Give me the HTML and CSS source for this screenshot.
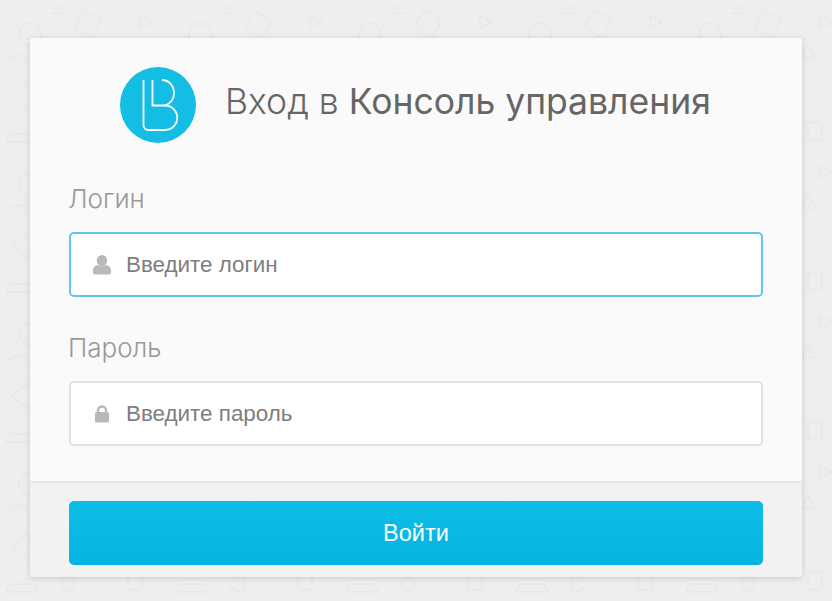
FILE: index.html
```html
<!DOCTYPE html>
<html lang="ru">
<head>
    <meta charset="UTF-8">
    <meta name="viewport" content="width=device-width, initial-scale=1.0">
    <title>Вход в Консоль управления</title>
    <link rel="stylesheet" href="styles.css">
</head>
<body>
    <form class="login-card">
        <div class="login-body">
            <header class="login-header">
                <svg class="logo" width="76" height="76" viewBox="0 0 76 76">
                    <circle cx="38" cy="38" r="38" fill="#14bde3"/>
                    <path d="M23.500 13V58a5 5 0 0 0 5 5H45a12 12 0 0 0 0-24.500H32.500V13M45 38.500a12.500 12.500 0 0 0 9-12.500c0-7-5-13-12-13" fill="none" stroke="#fff" stroke-width="1.800"/>
                </svg>
                <h1>Вход в <b>Консоль управления</b></h1>
            </header>

            <label class="field-label" for="login">Логин</label>
            <div class="field field-active">
                <svg class="field-icon" width="18" height="20" viewBox="0 0 18 20">
                    <ellipse cx="9" cy="5.500" rx="5.200" ry="5.500" fill="#b9b9b9"/>
                    <path d="M2 19.500a2 2 0 0 1-2-2v-2.500c0-3 2.500-4.500 5-5 2 1.500 6 1.500 8 0 2.500.5 5 2 5 5v2.500a2 2 0 0 1-2 2z" fill="#b9b9b9"/>
                </svg>
                <input id="login" type="text" placeholder="Введите логин">
            </div>

            <label class="field-label" for="password">Пароль</label>
            <div class="field">
                <svg class="field-icon" width="18" height="20" viewBox="0 0 18 20">
                    <path d="M5 9V6.500a4 4 0 0 1 8 0V9" fill="none" stroke="#b9b9b9" stroke-width="2.400"/>
                    <rect x="2" y="8" width="14" height="10.500" rx="1.500" fill="#b9b9b9"/>
                </svg>
                <input id="password" type="password" placeholder="Введите пароль">
            </div>
        </div>

        <footer class="login-footer">
            <button type="button" class="btn-login">Войти</button>
        </footer>
    </form>
</body>
</html>
```

FILE: styles.css
```css
html, body {
    height: 100%;
}
body {
    margin: 0;
    padding: 38px 30px 0;
    box-sizing: border-box;
    overflow: hidden;
    font-family: "Liberation Sans", Arial, sans-serif;
    background-color: #eeeeee;
    background-image: url("data:image/svg+xml,%3Csvg xmlns='http://www.w3.org/2000/svg' width='170' height='150' fill='none' stroke='%23e8e8e8' stroke-width='1.500'%3E%3Ccircle cx='30' cy='34' r='11'/%3E%3Crect x='78' y='14' width='20' height='20' rx='3' transform='rotate(30 88 24)'/%3E%3Cpath d='M12 96l14-12 14 12-14 12zM88 92c0-10 22-10 24 0 10 0 10 16 0 16H88c-10 0-10-16 0-16zM58 60h10v8H58zM128 46l8 12h-16zM140 16l12 6-12 6zM52 8h14M52 13h10M8 60c6-6 14-6 20 0M60 100h12v14H60z'/%3E%3Ccircle cx='68' cy='134' r='7'/%3E%3Crect x='128' y='122' width='14' height='18' rx='3'/%3E%3Cpath d='M10 134h24l4 8H6z'/%3E%3C/svg%3E");
}
.login-card {
    width: 772px;
    height: 539px;
    display: flex;
    flex-direction: column;
    background: #fafafa;
    border-radius: 3px;
    box-shadow: 0 1px 6px rgba(0, 0, 0, 0.16);
}
.login-body {
    flex: 1;
    min-height: 0;
    padding: 29px 39px 0;
}
.login-header {
    display: flex;
    align-items: center;
    gap: 29px;
    padding-left: 51px;
    margin-bottom: 40px;
}
.login-header h1 {
    margin: 0 0 7px;
    font-family: "Inter", sans-serif;
    font-size: 35.500px;
    font-weight: 300;
    color: #666;
    white-space: nowrap;
}
.login-header h1 b {
    font-weight: 400;
}
.field-label {
    display: block;
    font-family: "Inter", sans-serif;
    font-weight: 300;
    font-size: 26px;
    line-height: 32px;
    color: #999;
    margin-left: -1px;
    margin-bottom: 17px;
}
.field {
    height: 65px;
    box-sizing: border-box;
    display: flex;
    align-items: center;
    gap: 13px;
    padding-left: 22px;
    background: #fff;
    border: 2px solid #e2e2e2;
    border-radius: 5px;
    margin-bottom: 35px;
}
.field-active {
    border-color: #62c6ec;
}
.field-icon {
    flex: none;
}
.field input {
    flex: 1;
    border: none;
    outline: none;
    background: none;
    font-family: "Liberation Sans", Arial, sans-serif;
    font-size: 22.400px;
    color: #7e7e7e;
}
.field input::placeholder {
    color: #7e7e7e;
    opacity: 1;
}
.login-footer {
    flex: none;
    height: 96px;
    box-sizing: border-box;
    padding: 18px 39px 0;
    background: #f2f2f2;
    border-top: 2px solid #e8e8e8;
    border-radius: 0 0 3px 3px;
}
.btn-login {
    display: block;
    width: 100%;
    height: 64px;
    border: none;
    border-radius: 5px;
    background: linear-gradient(#0cbde5, #04b5e2);
    color: #fff;
    font-family: "Liberation Sans", Arial, sans-serif;
    font-size: 23.500px;
    cursor: pointer;
}
```
